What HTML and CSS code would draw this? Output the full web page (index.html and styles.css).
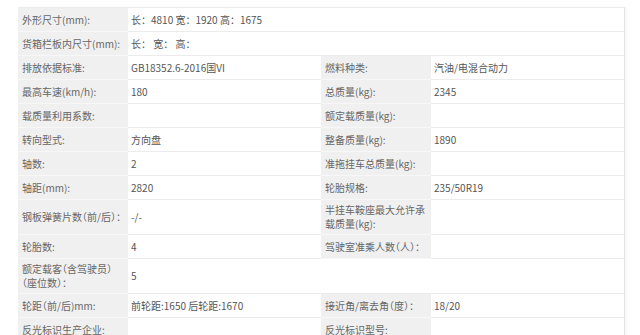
FILE: index.html
```html
<!DOCTYPE html>
<html lang="zh-CN">
<head>
<meta charset="utf-8">
<title>参数</title>
<link rel="stylesheet" href="styles.css">
</head>
<body>
<div class="page">
  <div class="spec">
    <div class="lab">外形尺寸(mm):</div><div class="val wide">长：4810 宽：1920 高：1675</div>
    <div class="lab">货箱栏板内尺寸(mm):</div><div class="val wide">长： 宽： 高：</div>
    <div class="lab">排放依据标准:</div><div class="val">GB18352.6-2016国VI</div><div class="lab">燃料种类:</div><div class="val">汽油/电混合动力</div>
    <div class="lab">最高车速(km/h):</div><div class="val">180</div><div class="lab">总质量(kg):</div><div class="val">2345</div>
    <div class="lab">载质量利用系数:</div><div class="val"></div><div class="lab">额定载质量(kg):</div><div class="val"></div>
    <div class="lab">转向型式:</div><div class="val">方向盘</div><div class="lab">整备质量(kg):</div><div class="val">1890</div>
    <div class="lab">轴数:</div><div class="val">2</div><div class="lab">准拖挂车总质量(kg):</div><div class="val"></div>
    <div class="lab">轴距(mm):</div><div class="val">2820</div><div class="lab">轮胎规格:</div><div class="val">235/50R19</div>
    <div class="lab">钢板弹簧片数（前/后）：</div><div class="val">-/-</div><div class="lab">半挂车鞍座最大允许承载质量(kg):</div><div class="val"></div>
    <div class="lab">轮胎数:</div><div class="val">4</div><div class="lab">驾驶室准乘人数（人）：</div><div class="val"></div>
    <div class="lab">额定载客（含驾驶员）（座位数）：</div><div class="val">5</div><div class="val"></div><div class="val"></div>
    <div class="lab">轮距（前/后)mm:</div><div class="val">前轮距:1650 后轮距:1670</div><div class="lab">接近角/离去角（度）：</div><div class="val">18/20</div>
    <div class="lab">反光标识生产企业:</div><div class="val"></div><div class="lab">反光标识型号:</div><div class="val"></div>
  </div>
</div>
</body>
</html>
```

FILE: styles.css
```css
html, body {
  margin: 0;
  padding: 0;
  background: #ffffff;
}
body {
  font-family: "Noto Sans CJK SC", "Noto Sans", sans-serif;
  font-size: 10px;
  color: #555;
}
.page {
  padding: 7px 16px 0 18px;
}
.spec {
  display: grid;
  grid-template-columns: 110px 193px 110px 193px;
  width: 606px;
  border-top: 1px solid #ececec;
  border-right: 1px solid #e6e6e6;
  box-shadow: 2px 0 2px rgba(0,0,0,0.03);
}
.lab, .val {
  display: flex;
  align-items: center;
  min-height: 17px;
  padding: 3px 2px 3px 4px;
  line-height: 14px;
  border-bottom: 1px solid #ececec;
}
.lab {
  background: #f0f0f0;
  color: #666;
  font-feature-settings: "halt";
  border-bottom-color: #f7f7f7;
}
.val {
  background: #fff;
  color: #555;
  padding-left: 3px;
}
.wide {
  grid-column: span 3;
}
```
